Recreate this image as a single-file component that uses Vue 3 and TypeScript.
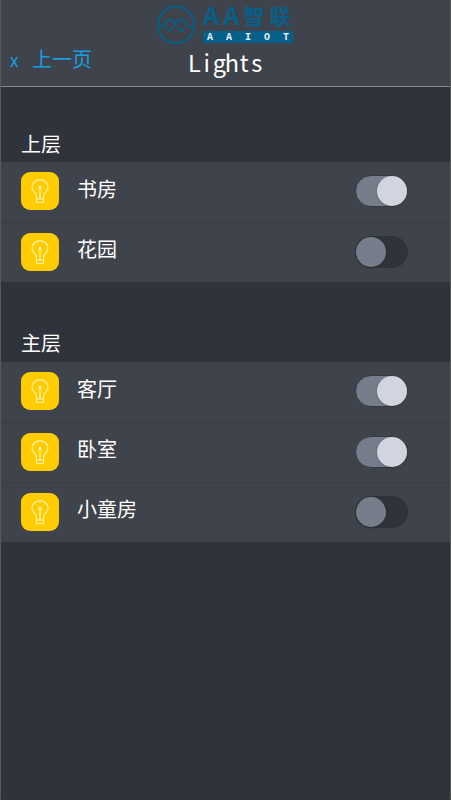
<script setup lang="ts">
interface Light {
  name: string
  on: boolean
}
interface Floor {
  title: string
  lights: Light[]
}

const title: string[] = Array.from('Lights')
const floors: Floor[] = [
  { title: '上层', lights: [{ name: '书房', on: true }, { name: '花园', on: false }] },
  {
    title: '主层',
    lights: [
      { name: '客厅', on: true },
      { name: '卧室', on: true },
      { name: '小童房', on: false },
    ],
  },
]
</script>

<template>
  <main class="screen">
    <header class="header">
      <button class="back"><span class="x">x</span><span>上一页</span></button>
      <div class="center">
        <div class="logo">
          <svg class="mark" viewBox="0 0 40 40">
            <circle cx="20" cy="20" r="18.2" />
            <path d="M4 21.8 H7.5 L11.2 16 Q12.2 14.6 14 14.6 Q15.8 14.6 17 16 L20 19.5" />
            <path d="M11.5 25.5 H14 L17.5 21.5 M20.5 18 L22.6 15.8 Q23.7 14.6 25.5 14.6 Q27.2 14.6 28.3 16 L32.5 21.8 H36" />
            <path d="M22.5 22 L25.5 25.5 H28" />
          </svg>
          <div class="brand">
            <div class="brand-name"><span class="aa">AA</span><span class="cn">智联</span></div>
            <div class="brand-sub"><span v-for="(c, i) in 'AAIOT'" :key="i">{{ c }}</span></div>
          </div>
        </div>
        <h1 class="title"><span v-for="(c, i) in title" :key="i">{{ c }}</span></h1>
      </div>
    </header>

    <section v-for="floor in floors" :key="floor.title" class="floor">
      <h2>{{ floor.title }}</h2>
      <div v-for="light in floor.lights" :key="light.name" class="row">
        <div class="icon">
          <svg viewBox="0 0 38 38">
            <path d="M15.5 27.5 V24 C15.5 21 11 19.5 11 15.2 A8 7.3 0 0 1 27 15.2 C27 19.5 22.5 21 22.5 24 V27.5" />
            <path d="M15.5 27 H22.5 V30.5 H15.5 Z M19 16 V26.5" />
            <circle class="dot" cx="19" cy="15.5" r="1.7" />
          </svg>
        </div>
        <span class="name">{{ light.name }}</span>
        <button class="switch" :class="{ on: light.on }" :aria-pressed="light.on"><i></i></button>
      </div>
    </section>
  </main>
</template>

<style>
body { background: #2f333b; }
</style>

<style scoped>
* { box-sizing: border-box; }
.screen {
  width: 451px;
  height: 800px;
  background: #2f333b;
  border-left: 1px solid #5b5955;
  border-right: 1px solid #5b5955;
  border-radius: 0 0 2px 2px;
  color: #fff;
  font-family: "Noto Sans CJK SC", sans-serif;
  overflow: hidden;
}
button { border: 0; padding: 0; background: none; font: inherit; }
.header {
  height: 87px;
  display: grid;
  grid-template-columns: 150px 150px 1fr;
  background: #3f434b;
  border-bottom: 1px solid #85878a;
}
.back {
  display: flex;
  align-items: center;
  height: 30px;
  margin-top: 44px;
  padding-left: 8px;
  color: #169fe0;
  font-size: 20px;
  line-height: 30px;
}
.x { width: 23px; padding: 2px 0 0 1px; text-align: left; font-size: 17px; line-height: 28px; }
.center { padding-top: 5px; }
.logo { display: flex; height: 41px; padding-left: 5px; }
.mark { width: 40px; height: 40px; fill: none; stroke: #07608a; stroke-width: 2; }
.brand { width: 90px; margin-left: 7px; color: #07608a; }
.brand-name { display: flex; height: 26px; font-weight: 700; }
.aa { width: 42px; font-size: 27px; letter-spacing: 4px; font-family: "Liberation Mono", monospace; line-height: 26px; }
.cn { font-size: 21px; letter-spacing: 5px; line-height: 21px; white-space: nowrap; }
.brand-sub {
  display: flex;
  justify-content: space-between;
  height: 12px;
  padding: 0 4px;
  background: #07608a;
  color: #e8f2f5;
  font: 700 10px/13px "Liberation Mono", monospace;
}
.title {
  display: flex;
  margin: 0 0 0 37px;
  font-size: 23.5px;
  font-weight: 400;
  line-height: 32px;
}
.title span { width: 12.5px; display: flex; justify-content: center; }
.floor h2 {
  height: 75px;
  margin: 0;
  padding: 42px 0 0 20px;
  font-size: 20px;
  font-weight: 400;
  line-height: 30px;
}
.floor + .floor h2 { height: 80px; padding-top: 46px; }
.row {
  display: flex;
  align-items: center;
  height: 60px;
  padding: 0 42px 2px 20px;
  background: #3f434b;
}
.row + .row { border-top: 1px solid #393d45; }
.icon { width: 38px; height: 38px; border-radius: 9px; background: #fc0; }
.icon svg { display: block; fill: none; stroke: #fff0b0; stroke-width: 1.2; }
.icon .dot { fill: #fff0b0; stroke: none; }
.name { margin: -5px auto 0 18px; font-size: 20px; line-height: 30px; }
.switch {
  width: 53px;
  height: 32px;
  padding: 1px;
  border-radius: 16px;
  background: #2f333b;
}
.switch i { display: block; width: 30px; height: 30px; border-radius: 50%; background: #777e8b; box-shadow: 0 1px 3px #2224; }
.switch.on { background: #777e8b; border: 1px solid #353942; padding: 0; }
.switch.on i { margin-left: 21px; background: #d1d5df; }
</style>
